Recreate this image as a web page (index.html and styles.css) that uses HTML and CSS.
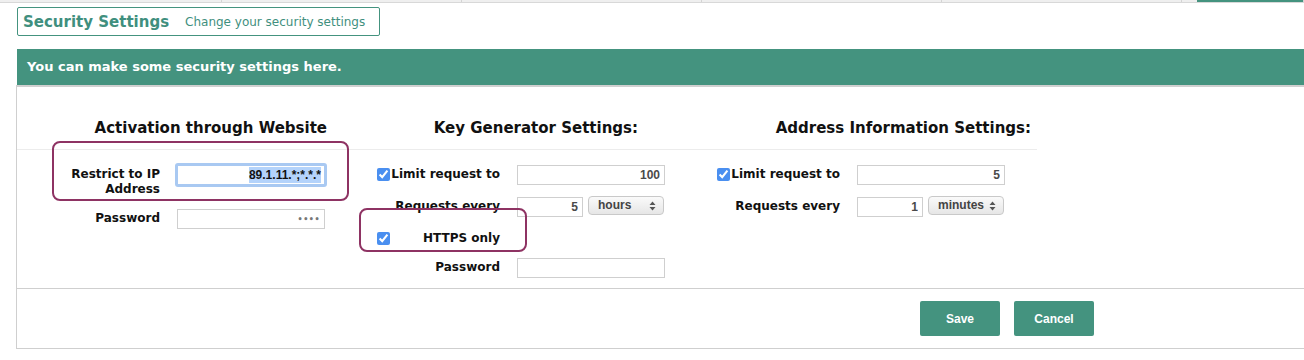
FILE: index.html
```html
<!DOCTYPE html>
<html lang="en">
<head>
  <meta charset="UTF-8" />
  <title>Security Settings</title>
  <link rel="stylesheet" href="styles.css">
</head>
<body>
  <div class="tabs">
    <div class="tab"></div>
    <div class="tab"></div>
    <div class="tab"></div>
    <div class="tab"></div>
    <div class="tab"></div>
    <div class="tab tab-gap"></div>
    <div class="tab tab-active"></div>
  </div>

  <div class="page">
    <div class="title-box">
      <span class="title">Security Settings</span>
      <span class="subtitle">Change your security settings</span>
    </div>

    <div class="banner">You can make some security settings here.</div>

    <div class="panel">
      <div class="panel-body">
        <div class="heads">
          <div class="head head-1">Activation through Website</div>
          <div class="head head-2">Key Generator Settings:</div>
          <div class="head head-3">Address Information Settings:</div>
        </div>

        <div class="groups">
          <!-- Website -->
          <div class="group">
            <label class="lbl">Restrict to IP Address</label>
            <div class="field field-focus"><span class="sel">89.1.11.*;*.*.*</span></div>
            <label class="lbl">Password</label>
            <input class="inp pwd" type="password" value="abcd" />
          </div>

          <!-- Key generator -->
          <div class="group">
            <label class="lbl lbl-check"><input type="checkbox" checked /> <span>Limit request to</span></label>
            <input class="inp" type="text" value="100" />
            <label class="lbl">Requests every</label>
            <div class="every">
              <input class="inp inp-small" type="text" value="5" />
              <div class="select">hours <svg width="7" height="10" viewBox="0 0 7 10"><path d="M3.5 0.5 L6.5 4 L0.5 4 Z M3.5 9.5 L6.5 6 L0.5 6 Z" fill="#555"/></svg></div>
            </div>
            <label class="lbl lbl-check"><input type="checkbox" checked /> <span>HTTPS only</span></label>
            <div></div>
            <label class="lbl">Password</label>
            <input class="inp" type="text" value="" />
          </div>

          <!-- Address info -->
          <div class="group">
            <label class="lbl lbl-check"><input type="checkbox" checked /> <span>Limit request to</span></label>
            <input class="inp" type="text" value="5" />
            <label class="lbl">Requests every</label>
            <div class="every">
              <input class="inp inp-small" type="text" value="1" />
              <div class="select">minutes <svg width="7" height="10" viewBox="0 0 7 10"><path d="M3.5 0.5 L6.5 4 L0.5 4 Z M3.5 9.5 L6.5 6 L0.5 6 Z" fill="#555"/></svg></div>
            </div>
          </div>
        </div>
      </div>

      <div class="actions">
        <button class="btn">Save</button>
        <button class="btn">Cancel</button>
      </div>
    </div>
  </div>

  <!-- annotation marks -->
  <div class="mark mark-ip"></div>
  <div class="mark mark-https"></div>
</body>
</html>
```

FILE: styles.css
```css
* { margin: 0; padding: 0; box-sizing: border-box; }
html, body { height: 100%; }

body {
  font-family: 'DejaVu Sans', Verdana, sans-serif;
  background: #fff;
  color: #111;
  overflow: hidden;
  position: relative;
}

/* TOP TABS */
.tabs {
  display: flex;
  height: 3px;
  background: #efefef;
  border-bottom: 1px solid #d8d8d8;
}

.tab {
  width: 240px;
  border-right: 1px solid #d4d4d4;
}
.tab:first-child { width: 222px; }
.tab.tab-gap { width: 15px; border-right: none; }
.tab.tab-active { flex: 1; background: #44937f; }

.page {
  padding-left: 16px;
  margin-right: -20px;
}

/* TITLE */
.title-box {
  margin: 4px 0 0 1px;
  width: 363px;
  height: 29px;
  border: 1px solid #44937f;
  border-radius: 2px;
  display: flex;
  align-items: center;
  padding-left: 5px;
  color: #3f8f7e;
  white-space: nowrap;
}

.title {
  font-size: 15px;
  font-weight: bold;
  margin-right: 16px;
}

.subtitle { font-size: 12px; }

/* BANNER */
.banner {
  margin: 13px 0 0 1px;
  height: 36px;
  background-color: #44937f;
  color: #fff;
  font-size: 13px;
  font-weight: bold;
  line-height: 36px;
  padding-left: 10px;
}

/* PANEL */
.panel {
  border-top: 2px solid #d0d0d0;
  border-left: 1px solid #cfcfcf;
  border-bottom: 1px solid #cfcfcf;
  height: 264px;
}

.panel-body {
  padding-top: 28px;
  padding-bottom: 10px;
  border-bottom: 1px solid #cfcfcf;
}

.heads {
  display: flex;
  width: 1020px;
  border-bottom: 1px solid #ececec;
  padding-bottom: 7px;
}

.head {
  width: 340px;
  text-align: right;
  font-size: 15px;
  font-weight: bold;
  line-height: 27px;
  white-space: nowrap;
}
.head-1 { padding-right: 30px; }
.head-2 { padding-right: 59px; }
.head-3 { padding-right: 6px; }

.groups {
  display: flex;
  padding-top: 15px;
}

.group {
  width: 340px;
  padding-left: 20px;
  display: grid;
  grid-template-columns: 123px 148px;
  column-gap: 17px;
  row-gap: 12px;
  align-items: start;
  align-content: start;
}

.lbl {
  font-size: 12px;
  font-weight: bold;
  line-height: 15px;
  padding-top: 2px;
  text-align: right;
}

.lbl-check {
  display: flex;
  justify-content: space-between;
  align-items: center;
  white-space: nowrap;
}

.lbl-check input {
  width: 13px;
  height: 13px;
  accent-color: #4a8ff0;
}

.inp, .field {
  height: 20px;
  width: 148px;
  border: 1px solid #cfcfcf;
  font-family: 'Liberation Sans', Arial, sans-serif;
  font-size: 12px;
  font-weight: bold;
  color: #4a4a4a;
  text-align: right;
  padding: 0 4px;
  outline: none;
}

.inp.pwd { font-family: 'DejaVu Sans', sans-serif; font-size: 8px; letter-spacing: 0.5px; color: #777; }

.field-focus {
  margin: -2px 0 0 -2px;
  width: 152px;
  height: 24px;
  border: 3px solid #a9c9f2;
  border-radius: 3px;
  color: #111;
  line-height: 18px;
  padding-right: 3px;
}

.sel { background: #b4d3fb; padding: 1px 0; }

.every {
  display: flex;
  gap: 5px;
  align-items: start;
}

.inp-small { width: 66px; }

.select {
  margin-top: -1px;
  width: 76px;
  height: 19px;
  border: 1px solid #c9c9c9;
  border-radius: 4px;
  background: linear-gradient(#fafafa, #e6e6e6);
  font-family: 'Liberation Sans', Arial, sans-serif;
  font-size: 12px;
  font-weight: bold;
  color: #444;
  padding: 0 7px 0 9px;
  line-height: 17px;
  display: flex;
  justify-content: space-between;
  align-items: center;
}

/* BUTTONS */
.actions {
  display: flex;
  gap: 14px;
  padding: 12px 0 0 903px;
}

.btn {
  width: 80px;
  height: 35px;
  background-color: #44937f;
  color: white;
  border: none;
  border-radius: 2px;
  font-family: 'Liberation Sans', Arial, sans-serif;
  font-size: 12px;
  font-weight: bold;
  cursor: pointer;
}

/* ANNOTATIONS */
.mark {
  position: absolute;
  border: 2px solid #8e3363;
  border-radius: 8px;
}
.mark-ip { left: 52px; top: 141px; width: 297px; height: 60px; }
.mark-https { left: 359px; top: 208px; width: 168px; height: 44px; }
```
